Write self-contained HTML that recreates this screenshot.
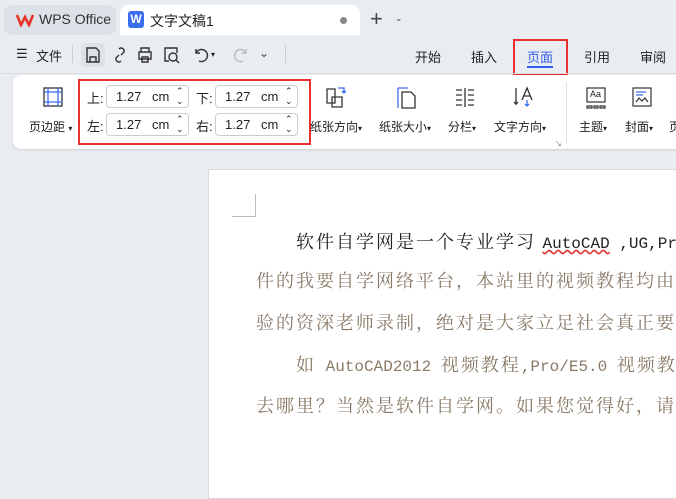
<!DOCTYPE html>
<html><head><meta charset="utf-8"><style>
*{margin:0;padding:0;box-sizing:border-box}
body{width:676px;height:494px;overflow:hidden;background:#e9ecf1;font-family:"Liberation Sans","Noto Sans CJK SC",sans-serif;color:#222;position:relative;font-size:13px}
.a{position:absolute}
.tab1{left:4px;top:5px;width:112px;height:30px;background:#dde1e8;border-radius:8px}
.tab2{left:120px;top:5px;width:240px;height:30px;background:#fff;border-radius:8px 8px 0 0}
.ribbon{left:13px;top:75px;width:680px;height:74px;background:#fff;border-radius:8px;box-shadow:0 1px 2px rgba(0,0,0,.12)}
.inp{position:absolute;width:83px;height:23px;border:1px solid #c9ccd2;border-radius:4px;background:#fff;font-size:13px}
.inp span{position:absolute;top:3px}
.lbl{position:absolute;font-size:13px}
.rl{position:absolute;font-size:12px;top:118px}
.paper{left:208px;top:169px;width:480px;height:330px;background:#fff;border:1px solid #d6d8dc}
.t{position:absolute;font-family:"Liberation Serif","Noto Serif CJK SC",serif;font-size:18px;white-space:nowrap;color:#8a7a68;letter-spacing:2px}
.m{font-family:"Liberation Mono",monospace;font-size:16px;letter-spacing:0}
</style></head><body>
<div class="a tab1"></div>
<svg class="a" style="left:16px;top:13px" width="18" height="14" viewBox="0 0 18 14"><path d="M1 2 L5 12 L9 4 L13 12 L17 2" fill="none" stroke="#e8342b" stroke-width="2.6" stroke-linejoin="miter"/></svg>
<div class="a" style="left:39px;top:11px;font-size:14px;color:#333">WPS Office</div>
<div class="a tab2"></div>
<div class="a" style="left:128px;top:11px;width:16px;height:17px;background:#3b6cf0;border-radius:3px;color:#fff;font-size:12px;font-weight:bold;text-align:center;line-height:17px">W</div>
<div class="a" style="left:150px;top:11px;font-size:14px">文字文稿1</div>
<div class="a" style="left:340px;top:17px;width:7px;height:7px;border-radius:50%;background:#888"></div>
<div class="a" style="left:370px;top:6px;font-size:22px;color:#444;font-weight:300">+</div>
<div class="a" style="left:395px;top:13px;font-size:9px;color:#444">⌄</div>

<div class="a" style="left:16px;top:46px;font-size:13px">☰</div>
<div class="a" style="left:36px;top:46px;font-size:13px">文件</div>
<div class="a" style="left:72px;top:45px;width:1px;height:18px;background:#ccc"></div>
<div class="a" style="left:81px;top:43px;width:24px;height:24px;background:#dde1e8;border-radius:4px"></div>
<svg class="a" style="left:85px;top:46px" width="16" height="18" viewBox="0 0 16 18" fill="none" stroke="#333" stroke-width="1.4"><path d="M2 2h9l3 3v11H2z M5 16v-5h6v5"/></svg>
<svg class="a" style="left:112px;top:46px" width="16" height="18" viewBox="0 0 16 18" fill="none" stroke="#333" stroke-width="1.4"><path d="M7 3a3 3 0 0 1 5 3l-3 3M9 15a3 3 0 0 1-5-3l3-3"/></svg>
<svg class="a" style="left:137px;top:46px" width="16" height="18" viewBox="0 0 16 18" fill="none" stroke="#333" stroke-width="1.4"><path d="M4 6V2h8v4M2 6h12v7H2zM5 11h6v5H5z"/></svg>
<svg class="a" style="left:163px;top:46px" width="18" height="18" viewBox="0 0 18 18" fill="none" stroke="#333" stroke-width="1.4"><path d="M6 15H2V2h12v5"/><circle cx="10" cy="11" r="4"/><path d="M13 14l3 3"/></svg>
<svg class="a" style="left:193px;top:47px" width="16" height="16" viewBox="0 0 16 16" fill="none" stroke="#333" stroke-width="1.4"><path d="M3 2v4h4M3 6a6 6 0 1 1 3 8"/></svg>
<div class="a" style="left:211px;top:50px;font-size:8px">▾</div>
<svg class="a" style="left:233px;top:47px" width="16" height="16" viewBox="0 0 16 16" fill="none" stroke="#bbb" stroke-width="1.4"><path d="M13 2v4H9M13 6a6 6 0 1 0-3 8"/></svg>
<div class="a" style="left:259px;top:46px;font-size:12px;color:#444">⌄</div>
<div class="a" style="left:285px;top:45px;width:1px;height:18px;background:#ccc"></div>

<div class="a" style="left:415px;top:47px">开始</div>
<div class="a" style="left:471px;top:47px">插入</div>
<div class="a" style="left:527px;top:47px;color:#2f5de8">页面</div>
<div class="a" style="left:527px;top:66px;width:26px;height:2px;background:#2f5de8"></div>
<div class="a" style="left:513px;top:39px;width:55px;height:37px;border:2px solid #e8302e"></div>
<div class="a" style="left:584px;top:47px">引用</div>
<div class="a" style="left:640px;top:47px">审阅</div>
<div class="a" style="left:0;top:73px;width:676px;height:1px;background:#d8dbe0"></div>

<div class="a ribbon"></div>
<svg class="a" style="left:43px;top:87px" width="20" height="20" viewBox="0 0 20 20" fill="none" stroke-width="1.3"><rect x="1" y="1" width="18" height="18" stroke="#333"/><path d="M5 1v18M15 1v18M1 5h18M1 15h18" stroke="#3b6cf0"/></svg>
<div class="rl" style="left:29px">页边距 <span style="font-size:8px">▾</span></div>
<div class="a" style="left:78px;top:79px;width:233px;height:66px;border:2px solid #e8302e"></div>
<div class="lbl" style="left:87px;top:88px">上:</div>
<div class="lbl" style="left:87px;top:116px">左:</div>
<div class="lbl" style="left:196px;top:88px">下:</div>
<div class="lbl" style="left:196px;top:116px">右:</div>
<div class="inp" style="left:106px;top:85px"><span style="left:9px">1.27</span><span style="left:45px">cm</span><span style="left:69px;top:0;font-size:9px;line-height:10px">⌃<br>⌄</span></div>
<div class="inp" style="left:106px;top:113px"><span style="left:9px">1.27</span><span style="left:45px">cm</span><span style="left:69px;top:0;font-size:9px;line-height:10px">⌃<br>⌄</span></div>
<div class="inp" style="left:215px;top:85px"><span style="left:9px">1.27</span><span style="left:45px">cm</span><span style="left:69px;top:0;font-size:9px;line-height:10px">⌃<br>⌄</span></div>
<div class="inp" style="left:215px;top:113px"><span style="left:9px">1.27</span><span style="left:45px">cm</span><span style="left:69px;top:0;font-size:9px;line-height:10px">⌃<br>⌄</span></div>

<svg class="a" style="left:326px;top:85px" width="22" height="24" viewBox="0 0 22 24" fill="none" stroke-width="1.3"><path d="M1 4h8v14H1z M6 12h10v10H6z" stroke="#333"/><path d="M12 3h6v5M16 6l2 2 2-2" stroke="#3b6cf0"/></svg>
<div class="rl" style="left:310px">纸张方向<span style="font-size:8px">▾</span></div>
<svg class="a" style="left:397px;top:87px" width="20" height="22" viewBox="0 0 20 22" fill="none" stroke-width="1.3"><path d="M1 1h10M1 1v20" stroke="#3b6cf0"/><path d="M5 5h9l4 4v12H5z" stroke="#333"/></svg>
<div class="rl" style="left:379px">纸张大小<span style="font-size:8px">▾</span></div>
<svg class="a" style="left:455px;top:87px" width="20" height="20" viewBox="0 0 20 20" fill="none" stroke="#333" stroke-width="1.3"><path d="M1 3h6M1 8h6M1 13h6M1 18h6M10 1v19M13 3h6M13 8h6M13 13h6M13 18h6"/></svg>
<div class="rl" style="left:448px">分栏<span style="font-size:8px">▾</span></div>
<svg class="a" style="left:513px;top:86px" width="22" height="22" viewBox="0 0 22 22" fill="none" stroke-width="1.3"><path d="M3 2v16l-2-2M3 18l2-2M9 14l5-12 5 12M11 10h6" stroke="#333"/><path d="M14 14v6M12 18l2 2 2-2" stroke="#3b6cf0"/></svg>
<div class="rl" style="left:494px">文字方向<span style="font-size:8px">▾</span></div>
<div class="a" style="left:555px;top:139px;font-size:7px;color:#666">↘</div>
<div class="a" style="left:566px;top:82px;width:1px;height:62px;background:#e0e2e6"></div>
<svg class="a" style="left:586px;top:87px" width="20" height="22" viewBox="0 0 20 22" fill="none" stroke="#333" stroke-width="1.2"><rect x="1" y="1" width="18" height="14"/><path d="M1 19h5v2H1zM8 19h4v2H8zM14 19h5v2h-5z"/></svg>
<div class="a" style="left:590px;top:89px;font-size:9px">Aa</div>
<div class="rl" style="left:579px">主题<span style="font-size:8px">▾</span></div>
<svg class="a" style="left:632px;top:87px" width="20" height="20" viewBox="0 0 20 20" fill="none" stroke-width="1.2"><rect x="1" y="1" width="18" height="18" stroke="#333"/><path d="M4 5h10M4 8h7" stroke="#3b6cf0"/><path d="M4 15l3-4 3 3 3-3 3 4" stroke="#333"/></svg>
<div class="rl" style="left:625px">封面<span style="font-size:8px">▾</span></div>
<div class="rl" style="left:669px">页</div>

<div class="a paper"></div>
<div class="a" style="left:232px;top:216px;width:24px;height:1px;background:#bbb"></div>
<div class="a" style="left:255px;top:194px;width:1px;height:23px;background:#bbb"></div>
<div class="t" style="left:296px;top:228px;color:#222">软件自学网是一个专业学习 <span class="m" style="text-decoration:underline wavy #e03030">AutoCAD</span><span class="m"> ,UG,Pro</span></div>
<div class="t" style="left:256px;top:267px">件的我要自学网络平台，本站里的视频教程均由</div>
<div class="t" style="left:256px;top:309px">验的资深老师录制，绝对是大家立足社会真正要</div>
<div class="t" style="left:296px;top:351px">如<span class="m"> AutoCAD2012 </span>视频教程<span class="m">,Pro/E5.0 </span>视频教程</div>
<div class="t" style="left:256px;top:392px">去哪里？当然是软件自学网。如果您觉得好，请</div>
</body></html>
